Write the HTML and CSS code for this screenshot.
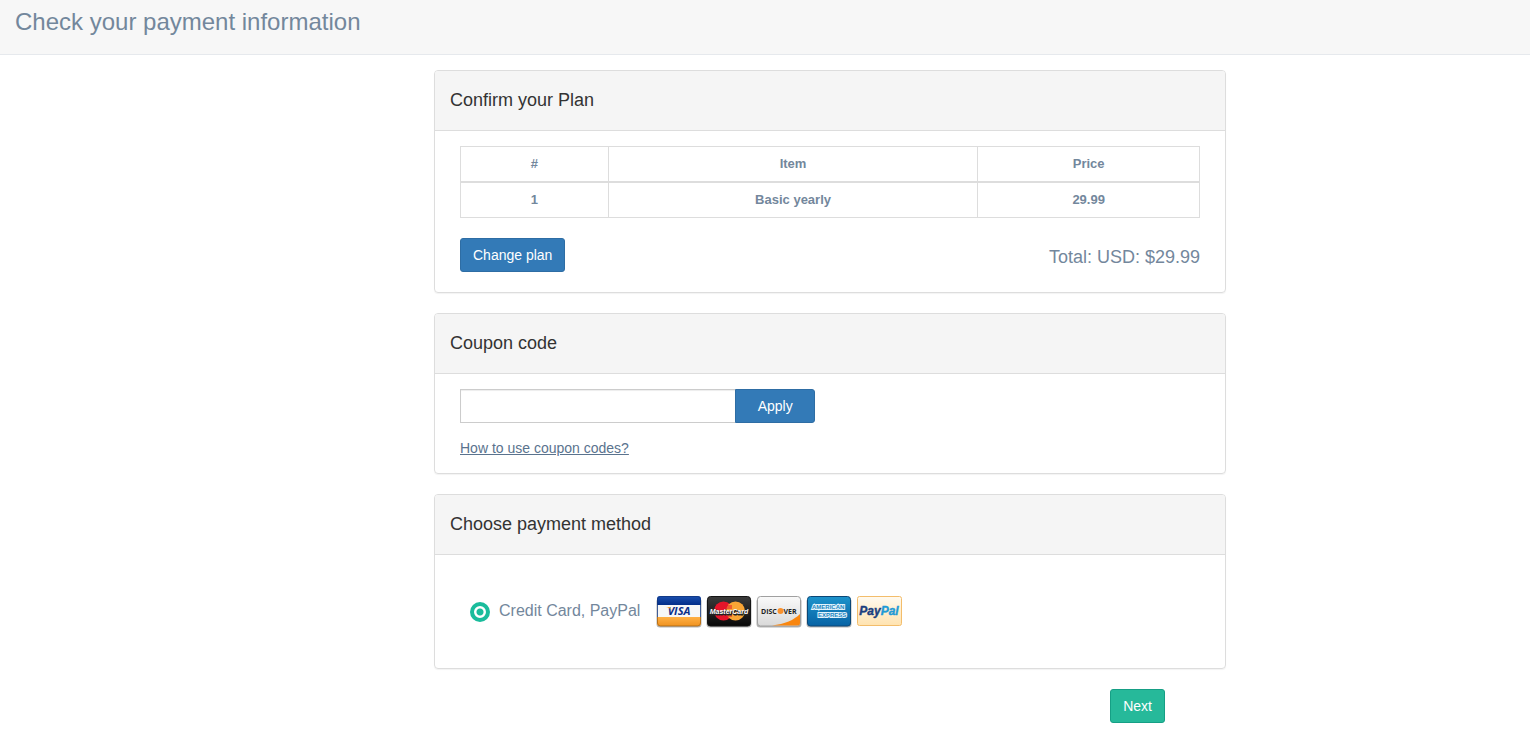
FILE: index.html
```html
<!DOCTYPE html>
<html lang="en">
<head>
    <meta charset="UTF-8">
    <meta name="viewport" content="width=device-width, initial-scale=1.0">
    <title>Check your payment information</title>
    <link rel="stylesheet" href="styles.css">
</head>
<body>
    <header class="page-header">
        <h1>Check your payment information</h1>
    </header>
    <form class="checkout">
        <section class="panel">
            <h2 class="panel-heading">Confirm your Plan</h2>
            <div class="panel-body plan">
                <table class="plan-table">
                    <thead>
                        <tr>
                            <th class="col-number">#</th>
                            <th class="col-item">Item</th>
                            <th class="col-price">Price</th>
                        </tr>
                    </thead>
                    <tbody>
                        <tr>
                            <td>1</td>
                            <td>Basic yearly</td>
                            <td>29.99</td>
                        </tr>
                    </tbody>
                </table>
                <div class="plan-footer">
                    <button type="button" class="btn btn-primary">Change plan</button>
                    <span class="total">Total: USD: $29.99</span>
                </div>
            </div>
        </section>

        <section class="panel">
            <h2 class="panel-heading"><label for="coupon">Coupon code</label></h2>
            <div class="panel-body">
                <div class="coupon-group">
                    <input type="text" id="coupon" name="coupon" class="coupon-input">
                    <button type="button" class="btn btn-primary btn-apply">Apply</button>
                </div>
                <a href="#" class="coupon-help">How to use coupon codes?</a>
            </div>
        </section>

        <section class="panel">
            <h2 class="panel-heading">Choose payment method</h2>
            <div class="panel-body methods">
                <input type="radio" id="method" name="method" class="method-radio" checked>
                <label for="method" class="method-label">Credit Card, PayPal</label>
                <div class="cards">
                    <!-- Visa -->
                    <svg class="card" viewBox="0 0 50 35" aria-hidden="true">
                        <defs>
                            <linearGradient id="visaBlue" x1="0" y1="0" x2="0" y2="1">
                                <stop offset="0" stop-color="#1b50b0"/>
                                <stop offset="1" stop-color="#022d88"/>
                            </linearGradient>
                            <linearGradient id="visaGold" x1="0" y1="0" x2="0" y2="1">
                                <stop offset="0" stop-color="#ffb044"/>
                                <stop offset="1" stop-color="#ee8f1c"/>
                            </linearGradient>
                            <clipPath id="cardShape"><rect x="3" y="2" width="44" height="30" rx="3"/></clipPath>
                        </defs>
                        <rect x="2.5" y="4" width="45" height="29.5" rx="3.5" fill="#000" opacity=".3"/>
                        <g clip-path="url(#cardShape)">
                            <rect x="2" y="2" width="46" height="31" fill="#f7f7f7"/>
                            <rect x="2" y="2" width="46" height="9" fill="url(#visaBlue)"/>
                            <rect x="2" y="23" width="46" height="10" fill="url(#visaGold)"/>
                        </g>
                        <path d="M3.5 23v6a3 3 0 0 0 3 3h37a3 3 0 0 0 3-3v-6" fill="none" stroke="#a86410" stroke-opacity=".8"/>
                        <path d="M3.5 23V5.5a3 3 0 0 1 3-3h37a3 3 0 0 1 3 3V23" fill="none" stroke="#12367d" stroke-opacity=".8"/>
                        <text x="25" y="21" class="visa-text">VISA</text>
                        <path d="M12 13h4l2 4c-1-2-3-3.5-6-4z" fill="#f5a12c"/>
                    </svg>
                    <!-- MasterCard -->
                    <svg class="card" viewBox="0 0 50 35" aria-hidden="true">
                        <defs>
                            <linearGradient id="mcBlack" x1="0" y1="0" x2="0" y2="1">
                                <stop offset="0" stop-color="#3b3b3b"/>
                                <stop offset="1" stop-color="#080808"/>
                            </linearGradient>
                        </defs>
                        <rect x="2.5" y="4" width="45" height="29.5" rx="3.5" fill="#000" opacity=".3"/>
                        <rect x="3.5" y="2.5" width="43" height="29.5" rx="3" fill="url(#mcBlack)" stroke="#151515"/>
                        <circle cx="19.5" cy="17" r="9.5" fill="#e5152a"/>
                        <circle cx="31.5" cy="17" r="9.5" fill="#f9a535"/>
                        <path d="M23 12h5M22 14h6M22 20h6M23 22h5" stroke="#e5152a"/>
                        <text x="25.5" y="20.5" class="mc-text mc-shadow">MasterCard</text>
                        <text x="25" y="20" class="mc-text">MasterCard</text>
                    </svg>
                    <!-- Discover -->
                    <svg class="card" viewBox="0 0 50 35" aria-hidden="true">
                        <defs>
                            <linearGradient id="discGray" x1="0" y1="0" x2="0" y2="1">
                                <stop offset="0" stop-color="#fafafa"/>
                                <stop offset="1" stop-color="#d9d9d9"/>
                            </linearGradient>
                        </defs>
                        <rect x="2.5" y="4" width="45" height="29.5" rx="3.5" fill="#000" opacity=".3"/>
                        <rect x="3.5" y="2.5" width="43" height="29.5" rx="3" fill="url(#discGray)" stroke="#a0a0a0"/>
                        <path d="M46 20C40 26 31 30 18 31.5h25.5a2.5 2.5 0 0 0 2.5-2.5z" fill="#f9860f"/>
                        <circle cx="26.5" cy="17" r="3" fill="#f9912c"/>
                        <text x="7" y="19.5" class="disc-text">DISC</text>
                        <text x="29.5" y="19.5" class="disc-text">VER</text>
                    </svg>
                    <!-- American Express -->
                    <svg class="card" viewBox="0 0 50 35" aria-hidden="true">
                        <defs>
                            <linearGradient id="amexBlue" x1="0" y1="0" x2="0" y2="1">
                                <stop offset="0" stop-color="#1d93cb"/>
                                <stop offset="1" stop-color="#0763a5"/>
                            </linearGradient>
                        </defs>
                        <rect x="2.5" y="4" width="45" height="29.5" rx="3.5" fill="#000" opacity=".3"/>
                        <rect x="3.5" y="2.5" width="43" height="29.5" rx="3" fill="url(#amexBlue)" stroke="#0c4776"/>
                        <text x="8" y="15" class="amex-text">AMERICAN</text>
                        <text x="14" y="23" class="amex-text">EXPRESS</text>
                    </svg>
                    <!-- PayPal -->
                    <svg class="card" viewBox="0 0 50 35" aria-hidden="true">
                        <defs>
                            <linearGradient id="ppCream" x1="0" y1="0" x2="0" y2="1">
                                <stop offset="0" stop-color="#fffaf0"/>
                                <stop offset="1" stop-color="#ffe3b0"/>
                            </linearGradient>
                        </defs>
                        <rect x="3.5" y="2.5" width="44" height="29" rx="2" fill="url(#ppCream)" stroke="#f3bd6b"/>
                        <text x="25" y="21" class="pp-text"><tspan class="pp-dark">Pay</tspan><tspan class="pp-light">Pal</tspan></text>
                    </svg>
                </div>
            </div>
        </section>

        <div class="actions">
            <button type="submit" class="btn btn-next">Next</button>
        </div>
    </form>
</body>
</html>
```
FILE: styles.css
```css
* {
    box-sizing: border-box;
}
body {
    margin: 0;
    background-color: #fff;
    color: #73879c;
    font-family: "Liberation Sans", Arial, sans-serif;
    font-size: 14px;
    line-height: 20px;
}
h1, h2 {
    margin: 0;
    font-weight: normal;
}
.page-header {
    padding: 8px 15px 18px;
    background-color: #f7f7f7;
    border-bottom: 1px solid #e6e9ed;
}
.page-header h1 {
    font-size: 24px;
    line-height: 28px;
}
.checkout {
    display: grid;
    grid-template-columns: 217fr 396fr 152fr;
    gap: 20px 0;
    padding: 15px 0 20px;
}
.checkout > * {
    grid-column: 2;
}
.panel {
    border: 1px solid #ddd;
    border-radius: 4px;
    box-shadow: 0 1px 1px rgba(0,0,0,0.05);
}
.panel-heading {
    padding: 19px 15px 20px;
    background-color: #f5f5f5;
    border-bottom: 1px solid #ddd;
    border-radius: 3px 3px 0 0;
    color: #333;
    font-size: 18px;
    line-height: 20px;
}
.panel-body {
    padding: 15px 25px;
}
.plan {
    padding-bottom: 20px;
}
.plan-table {
    width: 100%;
    border-collapse: collapse;
    font-size: 13px;
    font-weight: bold;
    line-height: 18px;
    text-align: center;
}
.plan-table th, .plan-table td {
    padding: 8px;
    border: 1px solid #ddd;
}
.plan-table th {
    border-bottom-width: 2px;
}
.col-number {
    width: 20%;
}
.col-item {
    width: 50%;
}
.col-price {
    width: 30%;
}
.plan-footer {
    display: flex;
    justify-content: space-between;
    align-items: center;
    margin-top: 20px;
}
.total {
    padding-top: 4px;
    font-size: 18px;
}
.btn {
    padding: 6px 12px;
    border: 1px solid transparent;
    border-radius: 3px;
    color: #fff;
    font-family: inherit;
    font-size: 14px;
    line-height: 20px;
    cursor: pointer;
}
.btn-primary {
    background-color: #337ab7;
    border-color: #2e6da4;
}
.btn-primary:hover {
    background-color: #286090;
}
.btn-next {
    background-color: #26b99a;
    border-color: #169f85;
}
.btn-next:hover {
    background-color: #169f85;
}
.coupon-group {
    display: flex;
    width: 48%;
}
.coupon-input {
    flex: 1;
    min-width: 0;
    height: 34px;
    padding: 6px 12px;
    border: 1px solid #ccc;
    border-right: 0;
    border-radius: 0;
    box-shadow: inset 0 1px 1px rgba(0,0,0,0.075);
    font-family: inherit;
    font-size: 14px;
}
.btn-apply {
    width: 80px;
    border-radius: 0 3px 3px 0;
}
.coupon-help {
    display: inline-block;
    margin-top: 15px;
    color: #5a738e;
}
.methods {
    display: flex;
    align-items: center;
    min-height: 113px;
    padding-left: 35px;
}
.method-radio {
    appearance: none;
    width: 20px;
    height: 20px;
    margin: 0;
    border: 4px solid #1abc9c;
    border-radius: 50%;
    background-color: #fff;
}
/* green dot inside the white gap */
.method-radio:checked {
    background-image: radial-gradient(circle, #1abc9c 3px, #fff 4px);
}
.method-label {
    margin: 0 14px 0 9px;
    padding-bottom: 2px;
    font-size: 16px;
}
.cards {
    display: flex;
    flex-wrap: wrap;
}
.card {
    width: 50px;
    height: 35px;
}
.card text {
    font-family: "Open Sans", sans-serif;
    font-weight: bold;
}
.card .visa-text {
    fill: #0b2f8a;
    font-size: 11px;
    font-style: italic;
    text-anchor: middle;
}
.card .mc-text {
    fill: #fff;
    font-family: "Liberation Sans", sans-serif;
    font-size: 7px;
    font-style: italic;
    text-anchor: middle;
}
.card .mc-shadow {
    fill: #222;
    stroke: #222;
}
.card .disc-text {
    fill: #222;
    font-size: 7px;
}
.card .amex-text {
    fill: #1b86c0;
    stroke: #e3f4fc;
    stroke-width: 2px;
    paint-order: stroke;
    font-family: "Liberation Sans", sans-serif;
    font-size: 6px;
}
.card .pp-text {
    font-family: "Liberation Sans", sans-serif;
    font-size: 12px;
    font-style: italic;
    text-anchor: middle;
}
.card .pp-dark {
    fill: #1b3f7f;
    stroke: #1b3f7f;
    stroke-width: 0.4;
}
.card .pp-light {
    fill: #1f9ad6;
    stroke: #1f9ad6;
    stroke-width: 0.4;
}
.actions {
    padding-right: 61px;
    text-align: right;
}
```
